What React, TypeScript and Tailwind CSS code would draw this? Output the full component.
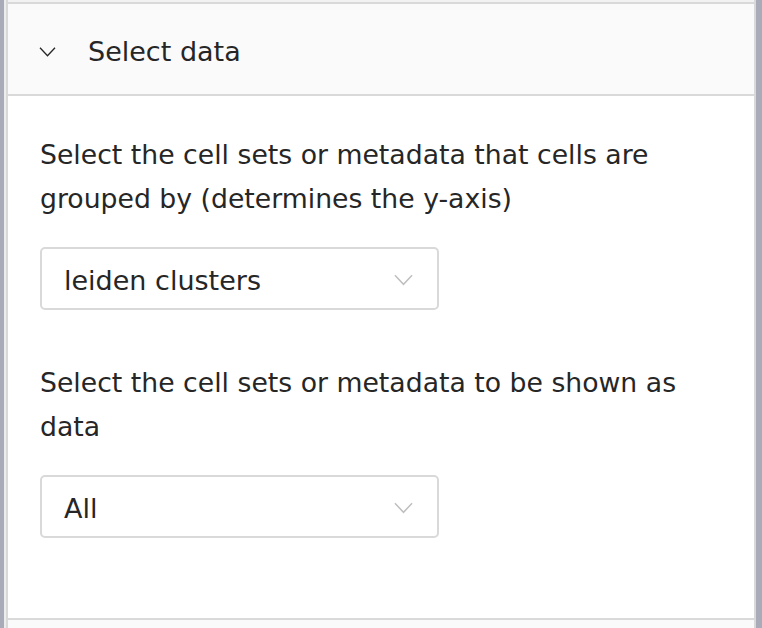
import React from "react";

function Chevron({ className }: { className: string }) {
	return (
		<svg viewBox="0 0 20 12" fill="none" className={className}>
			<polyline points="1,1 10,10.5 19,1" stroke="currentColor" strokeWidth="1.6" />
		</svg>
	);
}

function SelectBox({ value }: { value: string }) {
	return (
		<div className="w-[399px] h-[63px] border-2 border-[#d9d9d9] rounded-[5px] bg-white flex items-center justify-between pl-[22px] pr-[24px]">
			<span className="text-[27px] text-[#262626] pt-[6px]">{value}</span>
			<Chevron className="w-[19px] h-[12px] text-[#bfbfbf] mt-[2px]" />
		</div>
	);
}

export default function App() {
	return (
		<div
			className="h-screen w-full flex bg-[#a9abb9] pl-[4px] pr-[6px] overflow-hidden"
			style={{ fontFamily: '"DejaVu Sans", "Noto Sans CJK JP", sans-serif' }}
		>
			<div className="flex-1 flex flex-col bg-[#ececec] pl-[2px]">
				<div className="flex-1 flex flex-col border-x-2 border-[#d9d9d9]">
					<div className="h-[2px] bg-[#f2f2f2]" />
					<div className="h-[94px] bg-[#fafafa] border-y-2 border-[#d9d9d9] flex items-center pl-[31px] gap-[32px]">
						<Chevron className="w-[17px] h-[10px] text-[#262626] mt-[5px]" />
						<span className="text-[27px] text-[#262626] pt-[6px]">Select data</span>
					</div>
					<div className="bg-white px-[32px] pt-[37px] pb-[80px] flex flex-col text-[#262626]">
						<p className="text-[26.7px] leading-[44px]">
							Select the cell sets or metadata that cells are grouped by (determines the y-axis)
						</p>
						<div className="mt-[26px]">
							<SelectBox value="leiden clusters" />
						</div>
						<p className="text-[26.7px] leading-[44px] mt-[51px]">
							Select the cell sets or metadata to be shown as data
						</p>
						<div className="mt-[26px]">
							<SelectBox value="All" />
						</div>
					</div>
					<div className="border-t-2 border-[#d9d9d9] bg-[#fafafa] flex-1" />
				</div>
			</div>
		</div>
	);
}
